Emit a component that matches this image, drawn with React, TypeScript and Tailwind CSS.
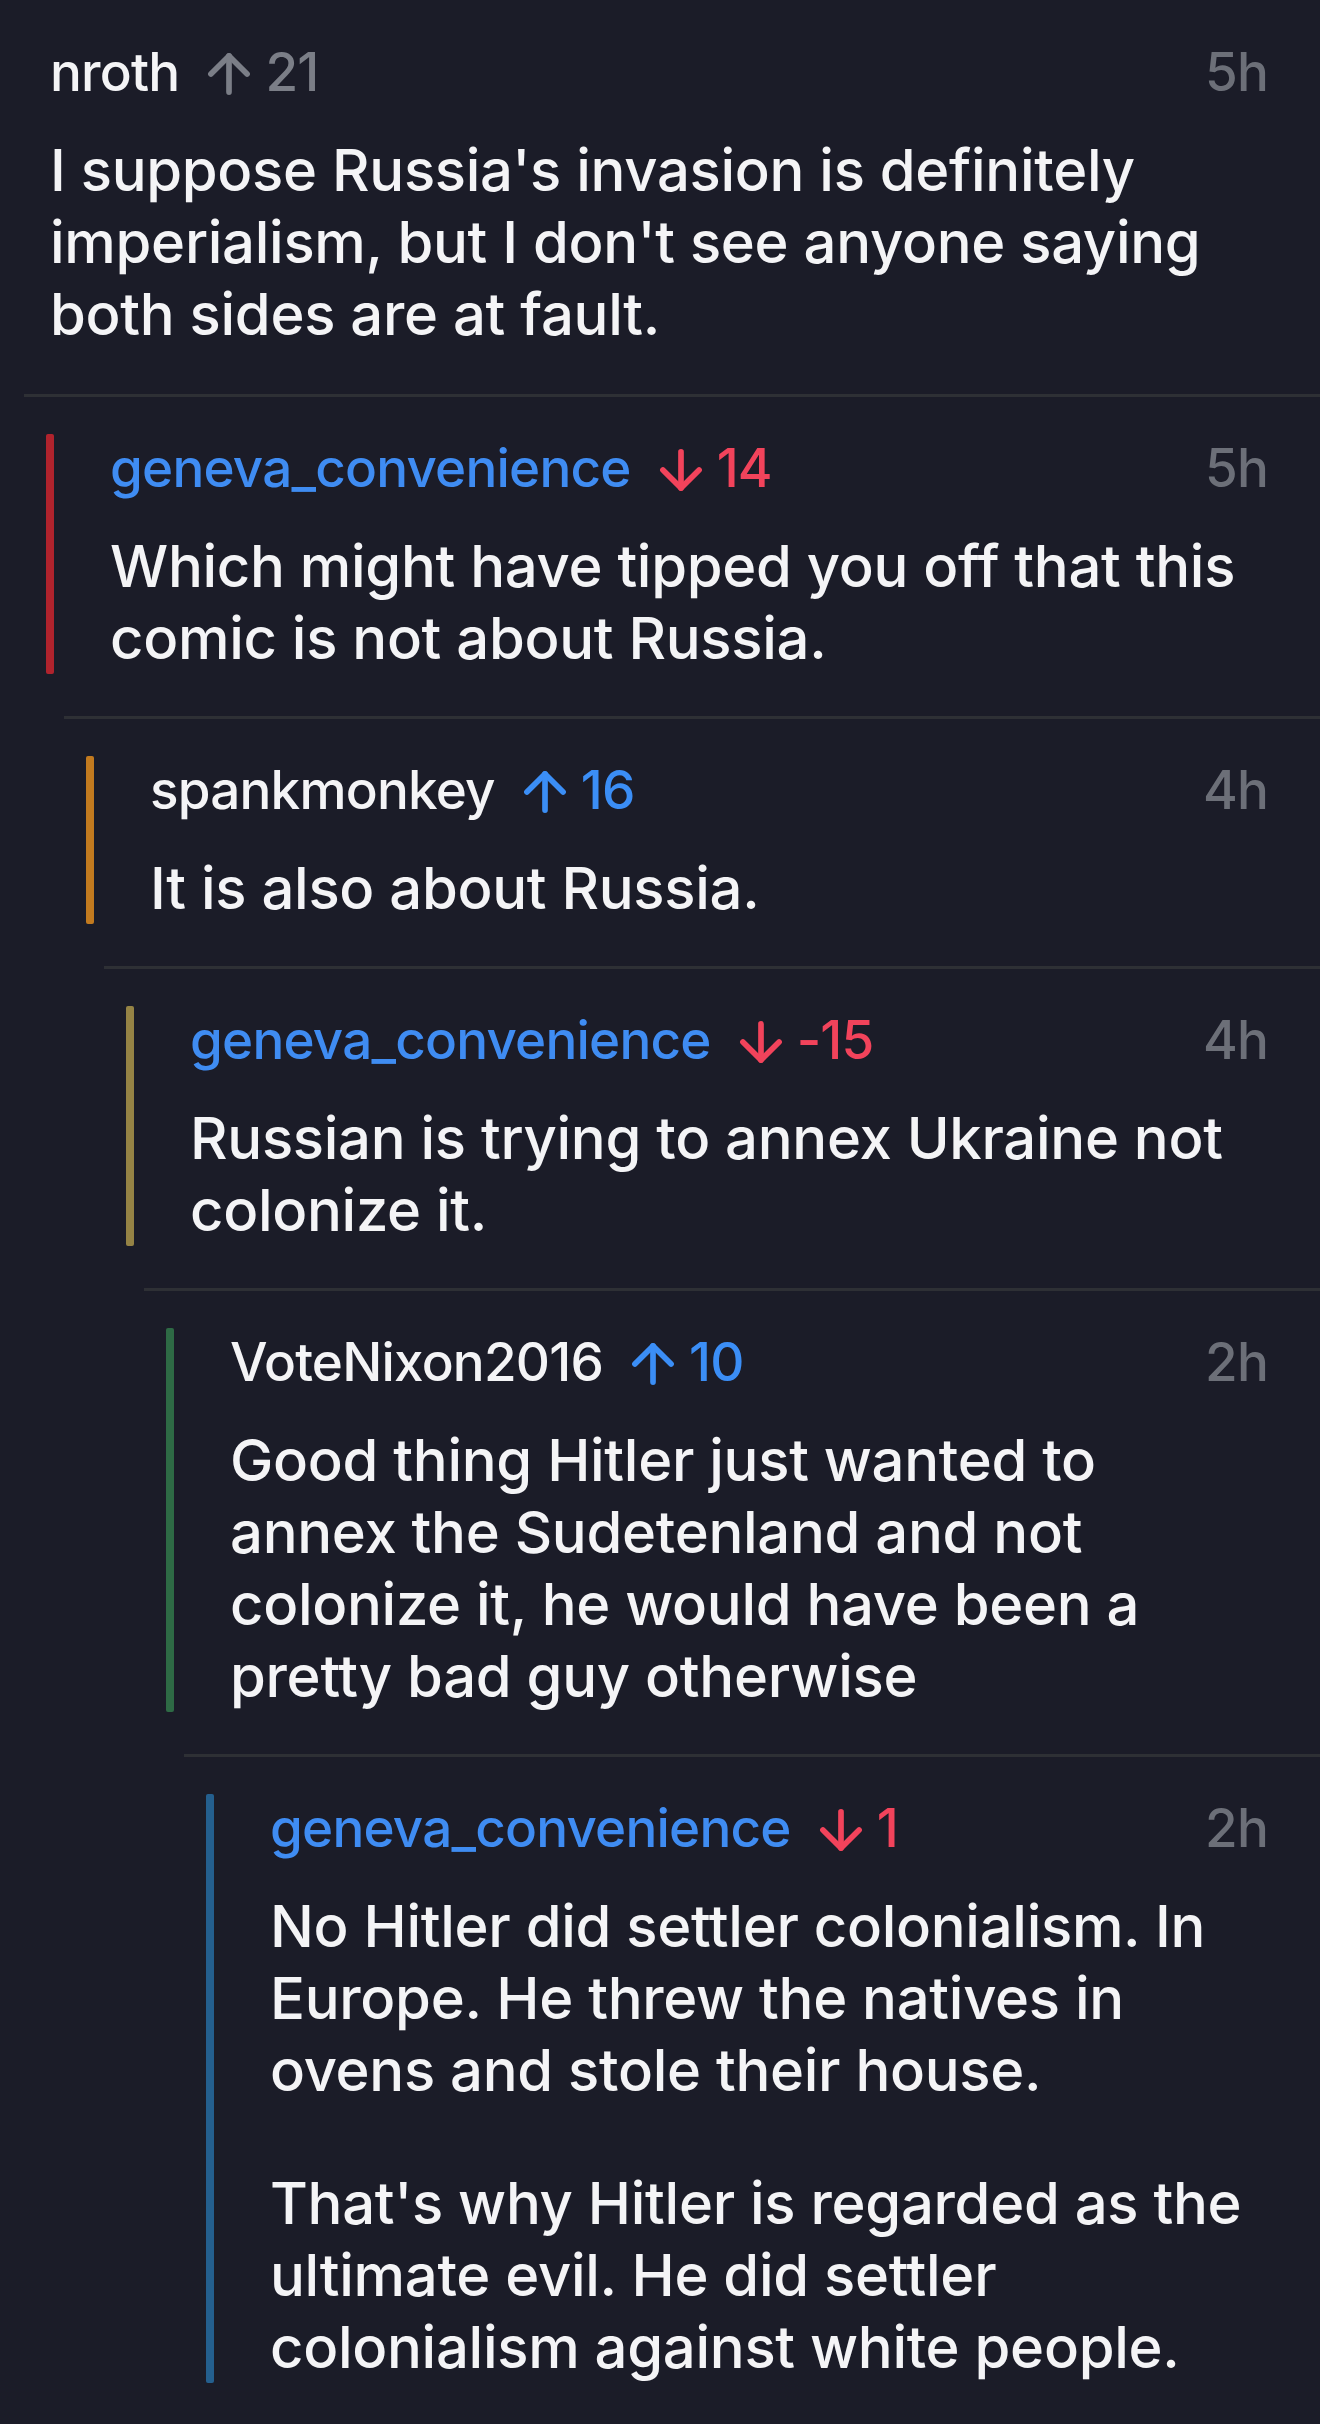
import { ArrowUp, ArrowDown } from 'lucide-react';

type Vote = 'up' | 'down' | 'none';

type Comment = {
  depth: number;
  user: string;
  op?: boolean;
  vote: Vote;
  score: string;
  time: string;
  paras: string[][];
};

const comments: Comment[] = [
  {
    depth: 0,
    user: 'nroth',
    vote: 'none',
    score: '21',
    time: '5h',
    paras: [[
      "I suppose Russia's invasion is definitely",
      "imperialism, but I don't see anyone saying",
      'both sides are at fault.',
    ]],
  },
  {
    depth: 1,
    user: 'geneva_convenience',
    op: true,
    vote: 'down',
    score: '14',
    time: '5h',
    paras: [['Which might have tipped you off that this', 'comic is not about Russia.']],
  },
  {
    depth: 2,
    user: 'spankmonkey',
    vote: 'up',
    score: '16',
    time: '4h',
    paras: [['It is also about Russia.']],
  },
  {
    depth: 3,
    user: 'geneva_convenience',
    op: true,
    vote: 'down',
    score: '-15',
    time: '4h',
    paras: [['Russian is trying to annex Ukraine not', 'colonize it.']],
  },
  {
    depth: 4,
    user: 'VoteNixon2016',
    vote: 'up',
    score: '10',
    time: '2h',
    paras: [[
      'Good thing Hitler just wanted to',
      'annex the Sudetenland and not',
      'colonize it, he would have been a',
      'pretty bad guy otherwise',
    ]],
  },
  {
    depth: 5,
    user: 'geneva_convenience',
    op: true,
    vote: 'down',
    score: '1',
    time: '2h',
    paras: [
      ['No Hitler did settler colonialism. In', 'Europe. He threw the natives in', 'ovens and stole their house.'],
      ["That's why Hitler is regarded as the", 'ultimate evil. He did settler', 'colonialism against white people.'],
    ],
  },
];

const dividerIndent: Record<number, string> = {
  1: 'ml-[24px]',
  2: 'ml-[64px]',
  3: 'ml-[104px]',
  4: 'ml-[144px]',
  5: 'ml-[184px]',
};

const barIndent: Record<number, string> = {
  1: 'pl-[46px]',
  2: 'pl-[86px]',
  3: 'pl-[126px]',
  4: 'pl-[166px]',
  5: 'pl-[206px]',
};

const barColor: Record<number, string> = {
  1: 'bg-[#b0232d]',
  2: 'bg-[#c27a1f]',
  3: 'bg-[#958345]',
  4: 'bg-[#2e6a45]',
  5: 'bg-[#245f8e]',
};

function VoteBadge({ vote, score }: { vote: Vote; score: string }) {
  const color =
    vote === 'down' ? 'text-[#f2435b]' : vote === 'up' ? 'text-[#3b8ef6]' : 'text-[#7b7e87]';
  return (
    <span className={`flex items-center ${color}`}>
      <span className="ml-[19px] flex translate-y-[2px] items-center">
        {vote === 'down' ? (
          <ArrowDown size={62} strokeWidth={2.2} />
        ) : (
          <ArrowUp size={62} strokeWidth={2.2} />
        )}
      </span>
      <span className="ml-[5px]">{score}</span>
    </span>
  );
}

function CommentContent({ c }: { c: Comment }) {
  return (
    <div className="min-w-0 flex-1">
      <div className="flex h-[68px] items-center justify-between text-[53px] leading-[68px] tracking-[-0.015em]">
        <div className="flex items-center">
          <span className={c.op ? 'text-[#3f8cf2]' : 'text-[#f4f4f6]'}>{c.user}</span>
          <VoteBadge vote={c.vote} score={c.score} />
        </div>
        <span className="text-[#6c6f78]">{c.time}</span>
      </div>
      <div className="mt-[28px] text-[58px] leading-[72px] tracking-[-0.005em] text-[#f4f4f6]">
        {c.paras.map((p, i) => (
          <p key={i} className={i > 0 ? 'mt-[61px]' : ''}>
            {p.map((line, j) => (
              <span key={j} className="block whitespace-nowrap">
                {line}
              </span>
            ))}
          </p>
        ))}
      </div>
    </div>
  );
}

export default function App() {
  return (
    <div className="min-h-[2424px] w-full overflow-hidden bg-[#1b1c28] font-['Inter',sans-serif] font-[450]">
      {comments.map((c, i) => (
        <div key={i}>
          {i > 0 && <div className={`h-[3px] bg-[#2e3035] ${dividerIndent[c.depth]}`} />}
          {c.depth === 0 ? (
            <div className="pt-[38px] pb-[44px] pl-[50px] pr-[52px]">
              <CommentContent c={c} />
            </div>
          ) : (
            <div className={`flex pt-[37px] pb-[42px] pr-[52px] ${barIndent[c.depth]}`}>
              <div className={`w-[8px] shrink-0 rounded-[2px] ${barColor[c.depth]}`} />
              <div className="ml-[56px] flex min-w-0 flex-1">
                <CommentContent c={c} />
              </div>
            </div>
          )}
        </div>
      ))}
    </div>
  );
}
